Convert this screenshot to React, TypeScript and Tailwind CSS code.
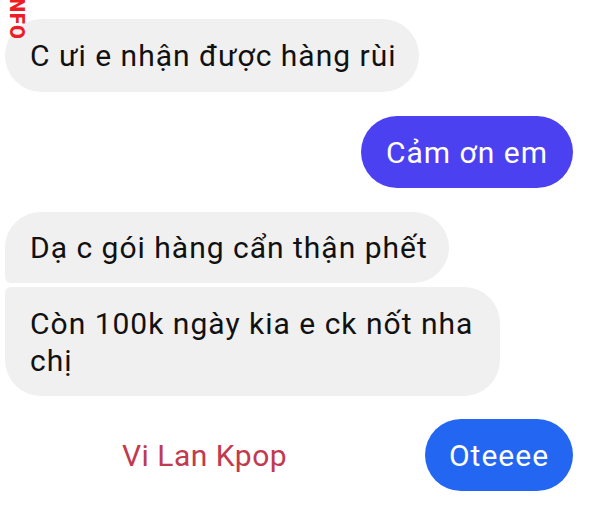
import React from "react";

export default function App() {
  const font = { fontFamily: "Roboto, 'Noto Sans', sans-serif" };
  return (
    <div
      className="relative w-[608px] h-[507px] bg-white overflow-hidden"
      style={font}
    >
      <div className="absolute left-[25px] top-[-9px] origin-top-left rotate-90 whitespace-nowrap text-[#ee1c25] font-black text-[20px] leading-[17px] tracking-[1px] z-10">
        INFO
      </div>
      <div className="flex flex-col pt-[19px] text-[30px] leading-[37px] tracking-[1px] text-[#111]">
        <div className="pl-[5px]">
          <div className="inline-block bg-[#f0f0f0] rounded-[37px] pl-[25px] pr-[22px] py-[18px]">
            C ưi e nhận được hàng rùi
          </div>
        </div>
        <div className="flex justify-end pr-[35px] mt-[24px]">
          <div className="bg-[#4b41f1] text-white rounded-[36px] px-[25px] py-[17.5px]">
            Cảm ơn em
          </div>
        </div>
        <div className="pl-[5px] mt-[24px] flex flex-col gap-[4px] items-start">
          <div className="bg-[#f0f0f0] rounded-[36px] rounded-bl-[6px] pl-[25px] pr-[21px] py-[17px]">
            Dạ c gói hàng cẩn thận phết
          </div>
          <div className="w-[495px] bg-[#f0f0f0] rounded-[36px] rounded-tl-[6px] pl-[25px] pr-[22px] py-[17.5px]">
            Còn 100k ngày kia e ck nốt nha
            <br />
            chị
          </div>
        </div>
        <div className="flex items-center justify-between pl-[122px] pr-[35px] mt-[23px]">
          <div className="text-[#c23a4e] tracking-[0.5px]">Vi Lan Kpop</div>
          <div className="bg-[#2366f1] text-white rounded-[36px] w-[148px] text-center py-[17.5px]">
            Oteeee
          </div>
        </div>
      </div>
    </div>
  );
}
